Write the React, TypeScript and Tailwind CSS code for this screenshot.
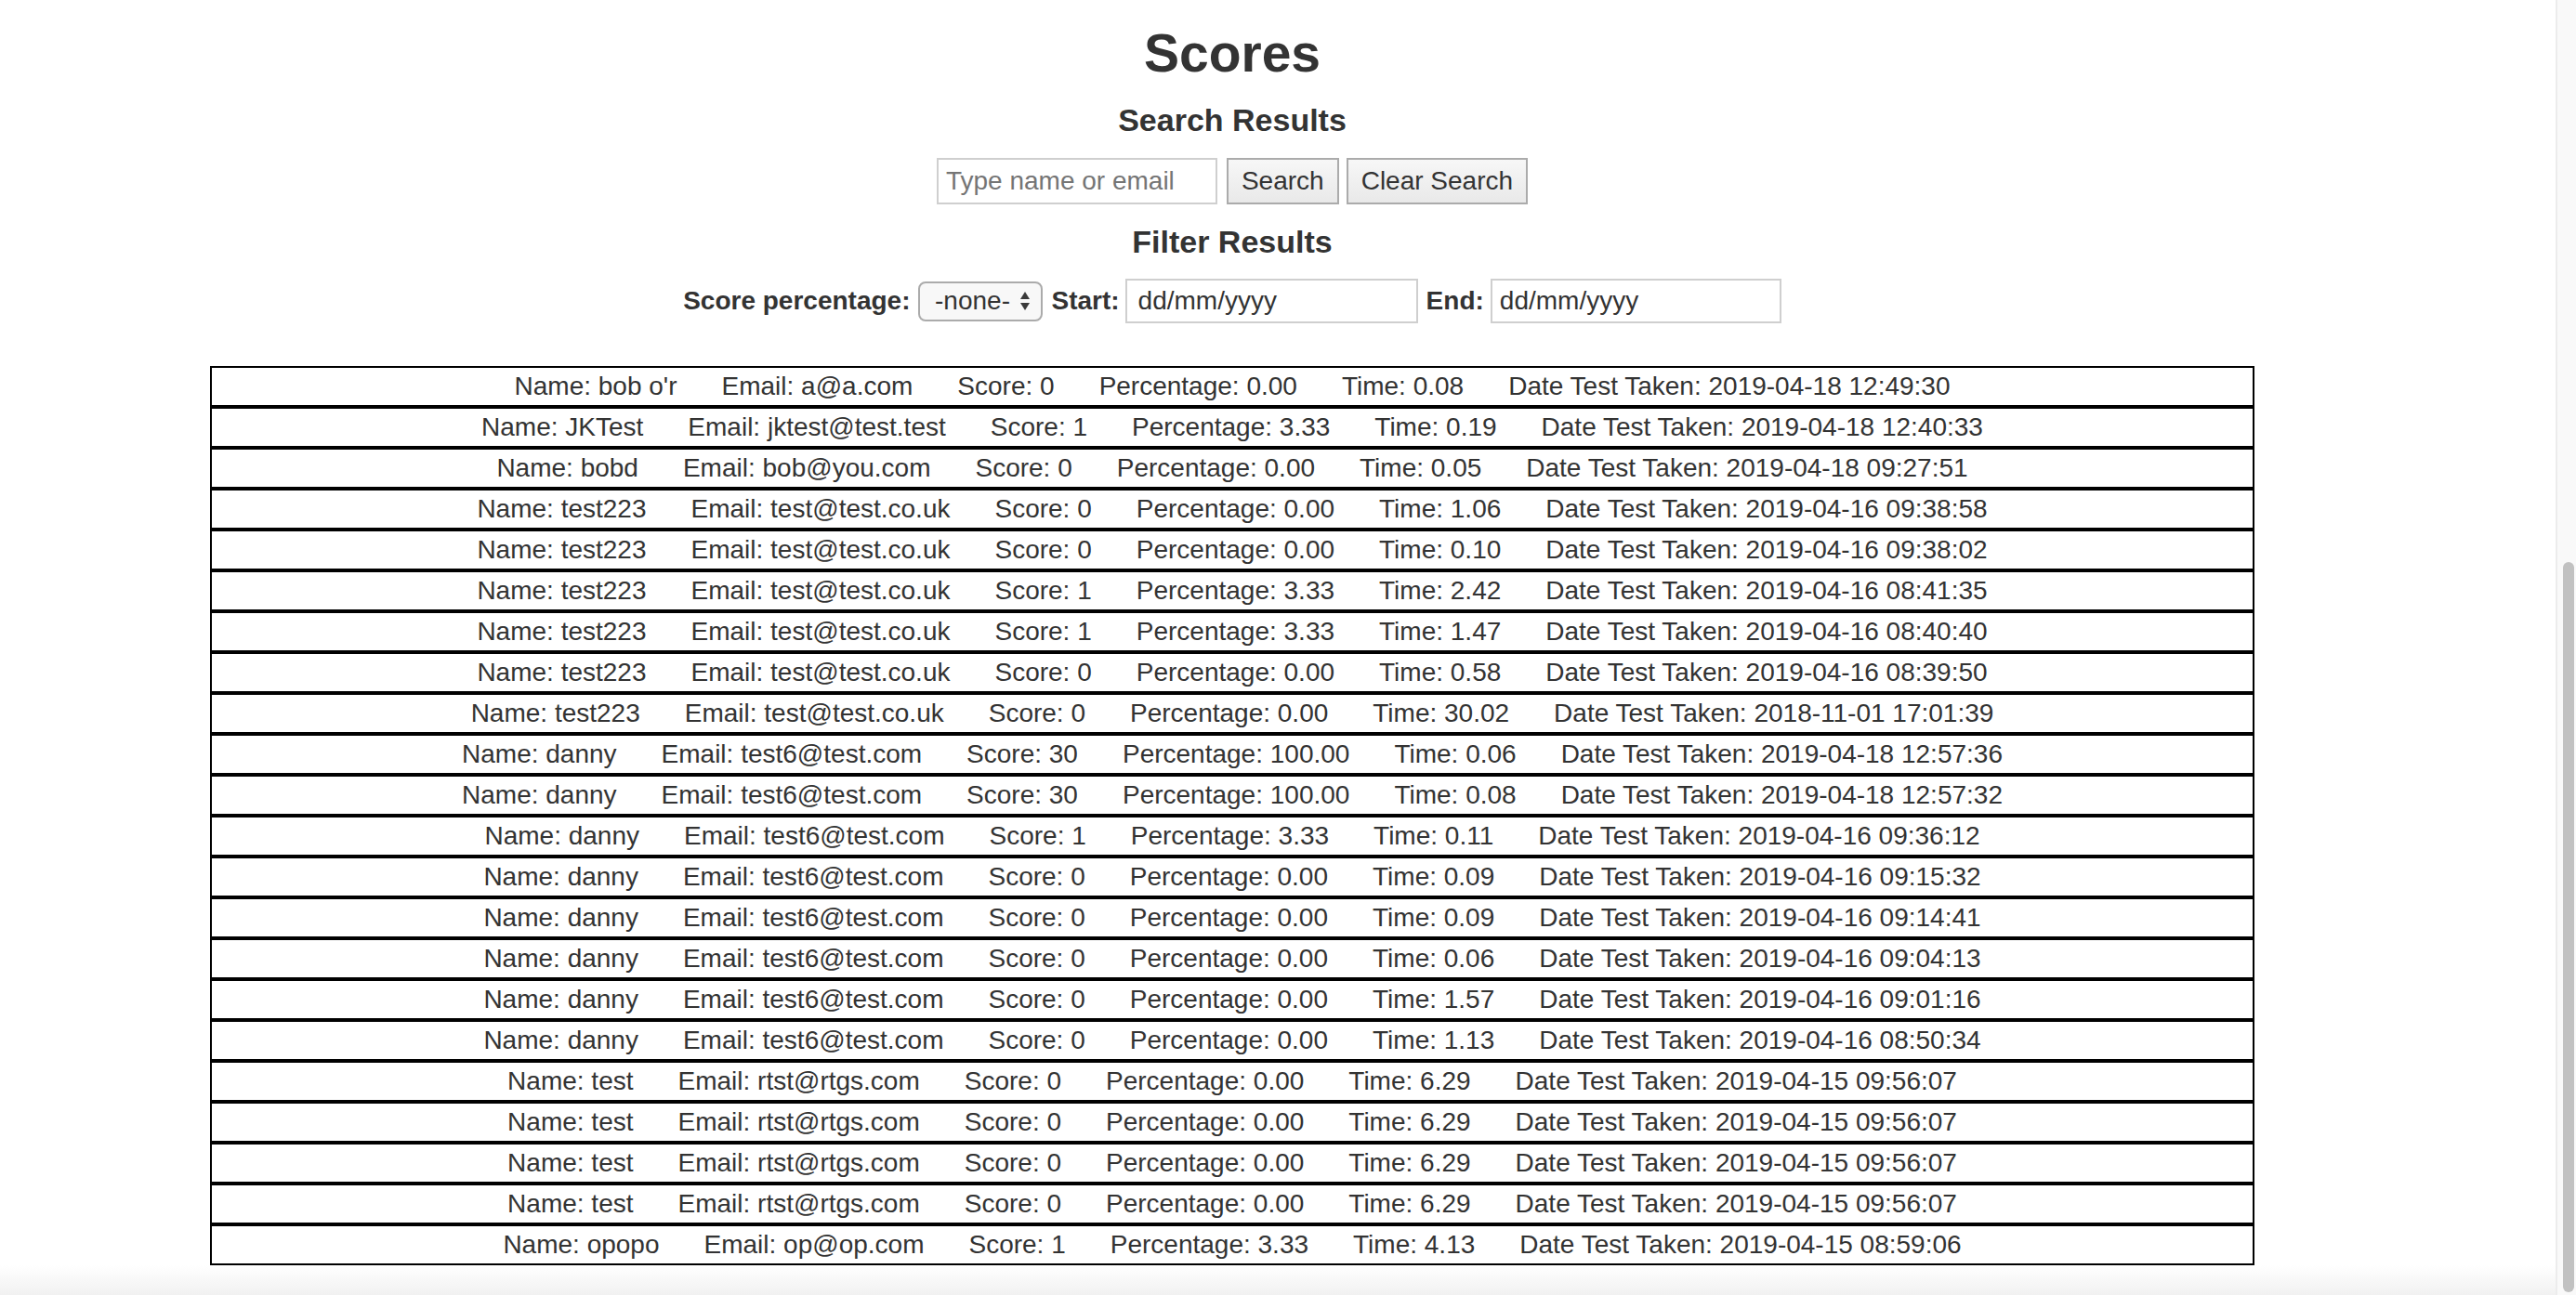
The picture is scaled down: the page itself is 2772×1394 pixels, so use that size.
type Score = {
  name: string;
  email: string;
  score: string;
  percentage: string;
  time: string;
  date: string;
};

const scores: Score[] = [
  { name: "bob o'r", email: "a@a.com", score: "0", percentage: "0.00", time: "0.08", date: "2019-04-18 12:49:30" },
  { name: "JKTest", email: "jktest@test.test", score: "1", percentage: "3.33", time: "0.19", date: "2019-04-18 12:40:33" },
  { name: "bobd", email: "bob@you.com", score: "0", percentage: "0.00", time: "0.05", date: "2019-04-18 09:27:51" },
  { name: "test223", email: "test@test.co.uk", score: "0", percentage: "0.00", time: "1.06", date: "2019-04-16 09:38:58" },
  { name: "test223", email: "test@test.co.uk", score: "0", percentage: "0.00", time: "0.10", date: "2019-04-16 09:38:02" },
  { name: "test223", email: "test@test.co.uk", score: "1", percentage: "3.33", time: "2.42", date: "2019-04-16 08:41:35" },
  { name: "test223", email: "test@test.co.uk", score: "1", percentage: "3.33", time: "1.47", date: "2019-04-16 08:40:40" },
  { name: "test223", email: "test@test.co.uk", score: "0", percentage: "0.00", time: "0.58", date: "2019-04-16 08:39:50" },
  { name: "test223", email: "test@test.co.uk", score: "0", percentage: "0.00", time: "30.02", date: "2018-11-01 17:01:39" },
  { name: "danny", email: "test6@test.com", score: "30", percentage: "100.00", time: "0.06", date: "2019-04-18 12:57:36" },
  { name: "danny", email: "test6@test.com", score: "30", percentage: "100.00", time: "0.08", date: "2019-04-18 12:57:32" },
  { name: "danny", email: "test6@test.com", score: "1", percentage: "3.33", time: "0.11", date: "2019-04-16 09:36:12" },
  { name: "danny", email: "test6@test.com", score: "0", percentage: "0.00", time: "0.09", date: "2019-04-16 09:15:32" },
  { name: "danny", email: "test6@test.com", score: "0", percentage: "0.00", time: "0.09", date: "2019-04-16 09:14:41" },
  { name: "danny", email: "test6@test.com", score: "0", percentage: "0.00", time: "0.06", date: "2019-04-16 09:04:13" },
  { name: "danny", email: "test6@test.com", score: "0", percentage: "0.00", time: "1.57", date: "2019-04-16 09:01:16" },
  { name: "danny", email: "test6@test.com", score: "0", percentage: "0.00", time: "1.13", date: "2019-04-16 08:50:34" },
  { name: "test", email: "rtst@rtgs.com", score: "0", percentage: "0.00", time: "6.29", date: "2019-04-15 09:56:07" },
  { name: "test", email: "rtst@rtgs.com", score: "0", percentage: "0.00", time: "6.29", date: "2019-04-15 09:56:07" },
  { name: "test", email: "rtst@rtgs.com", score: "0", percentage: "0.00", time: "6.29", date: "2019-04-15 09:56:07" },
  { name: "test", email: "rtst@rtgs.com", score: "0", percentage: "0.00", time: "6.29", date: "2019-04-15 09:56:07" },
  { name: "opopo", email: "op@op.com", score: "1", percentage: "3.33", time: "4.13", date: "2019-04-15 08:59:06" },
];

function SelectArrows() {
  return (
    <svg width="12" height="22" viewBox="0 0 12 22" className="ml-[10px]">
      <path d="M6 1 L11 9 L1 9 Z" fill="#3a3a3a" />
      <path d="M6 21 L11 13 L1 13 Z" fill="#3a3a3a" />
    </svg>
  );
}

function ScoreRow({ row }: { row: Score }) {
  return (
    <div className="flex justify-center gap-[48px] border-2 border-black leading-[40px] whitespace-nowrap">
      <span>Name: {row.name}</span>
      <span>Email: {row.email}</span>
      <span>Score: {row.score}</span>
      <span>Percentage: {row.percentage}</span>
      <span>Time: {row.time}</span>
      <span>Date Test Taken: {row.date}</span>
    </div>
  );
}

export default function App() {
  return (
    <div className="flex h-[1394px] overflow-hidden bg-white text-[28px] text-[#333] font-['Liberation_Sans',Arial,sans-serif]">
      <div className="flex flex-1 flex-col">
        <div className="pl-[226px]">
          <div className="flex w-[2200px] flex-col items-center">
            <h1 className="mt-[25px] text-[57px] leading-[64px] font-bold">Scores</h1>
            <h3 className="mt-[20px] text-[34px] leading-[40px] font-bold">Search Results</h3>

            <div className="mt-[21px] flex items-center">
              <div className="flex h-[50px] w-[302px] items-center border-2 border-[#cfcfcf] px-[8px] text-[#757575]">
                Type name or email
              </div>
              <button className="ml-[10px] h-[50px] border-2 border-[#ababab] bg-gradient-to-b from-[#f7f7f7] to-[#e9e9e9] px-[14px] text-[#333]">
                Search
              </button>
              <button className="ml-[8px] h-[50px] border-2 border-[#ababab] bg-gradient-to-b from-[#f7f7f7] to-[#e9e9e9] px-[14px] text-[#333]">
                Clear Search
              </button>
            </div>

            <h3 className="mt-[20px] text-[34px] leading-[40px] font-bold">Filter Results</h3>

            <div className="mt-[20px] flex h-[48px] items-center">
              <span className="font-bold">Score percentage:</span>
              <div className="ml-[9px] flex h-[43px] w-[134px] items-center justify-center rounded-[8px] border-2 border-[#ababab] bg-[#f8f8f8] pl-[4px]">
                <span>-none-</span>
                <SelectArrows />
              </div>
              <span className="ml-[9px] font-bold">Start:</span>
              <div className="ml-[6px] flex h-[48px] w-[315px] items-center border-2 border-[#cfcfcf] pl-[12px]">
                dd/mm/yyyy
              </div>
              <span className="ml-[9px] font-bold">End:</span>
              <div className="ml-[7px] flex h-[48px] w-[313px] items-center border-2 border-[#cfcfcf] pl-[8px]">
                dd/mm/yyyy
              </div>
            </div>

            <div className="mt-[46px] flex w-full flex-col">
              {scores.map((row, i) => (
                <ScoreRow key={i} row={row} />
              ))}
            </div>
          </div>
        </div>
        <div className="mt-auto h-[32px] bg-gradient-to-b from-white to-[#f1f1f1]" />
      </div>

      {/* scrollbar as in the screenshot */}
      <div className="flex w-[22px] flex-col border-l-2 border-[#ececec] bg-[#f9f9f9] pl-[6px] pr-[2px]">
        <div className="mt-[605px] mb-[3px] flex-1 rounded-full bg-[#c1c1c1]" />
      </div>
    </div>
  );
}
